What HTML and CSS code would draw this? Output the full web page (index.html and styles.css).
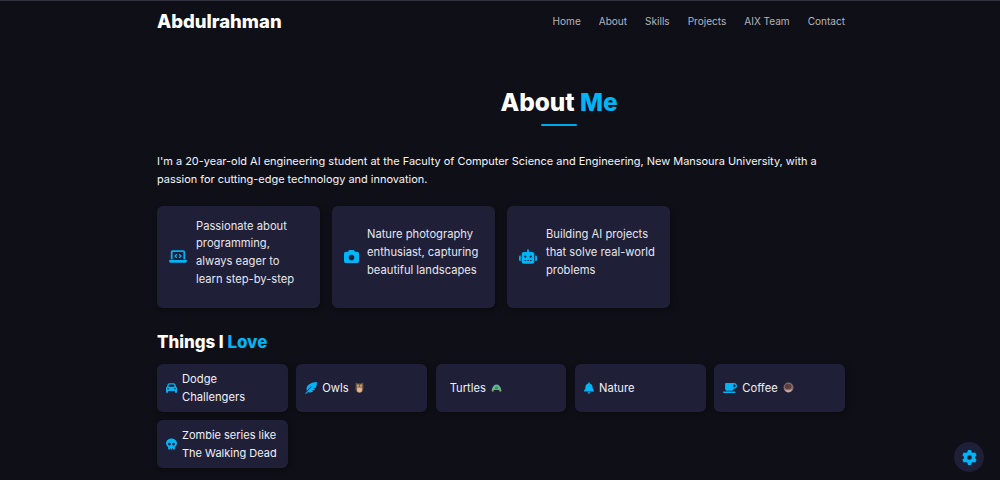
FILE: index.html
```html
<!DOCTYPE html>
<html lang="en">
<head>
<meta charset="utf-8">
<title>Abdulrahman - About</title>
<link rel="stylesheet" href="styles.css">
</head>
<body>
<header class="header">
  <div class="wrap header-row">
    <a class="logo">Abdulrahman</a>
    <nav class="nav">
      <a>Home</a><a>About</a><a>Skills</a><a>Projects</a><a>AIX Team</a><a>Contact</a>
    </nav>
  </div>
</header>
<main class="wrap">
  <h1 class="title">About <span class="accent">Me</span></h1>
  <div class="rule-row"><span class="rule"></span></div>
  <p class="intro">I'm a 20-year-old AI engineering student at the Faculty of Computer Science and Engineering, New Mansoura University, with a<br>passion for cutting-edge technology and innovation.</p>
  <section class="features">
    <article class="feature">
      <svg class="ficon laptop" viewBox="0 0 640 512"><path d="M64 96c0-35.3 28.7-64 64-64H512c35.3 0 64 28.7 64 64V352H512V96H128V352H64V96zM0 403.2C0 392.6 8.6 384 19.2 384H620.8c10.6 0 19.2 8.6 19.2 19.2c0 42.4-34.4 76.8-76.8 76.8H76.8C34.4 480 0 445.6 0 403.2zM281 209l-31 31 31 31c9.4 9.4 9.4 24.6 0 33.9s-24.6 9.4-33.9 0l-48-48c-9.4-9.4-9.4-24.6 0-33.9l48-48c9.4-9.4 24.6-9.4 33.9 0s9.4 24.6 0 33.9zM393 175l48 48c9.4 9.4 9.4 24.6 0 33.9l-48 48c-9.4 9.4-24.6 9.4-33.9 0s-9.4-24.6 0-33.9l31-31-31-31c-9.4-9.4-9.4-24.6 0-33.9s24.6-9.4 33.9 0z"/></svg>
      <p>Passionate about<br>programming,<br>always eager to<br>learn step-by-step</p>
    </article>
    <article class="feature">
      <svg class="ficon camera" viewBox="0 0 512 512"><path d="M149.1 64.8L138.7 96H64C28.7 96 0 124.7 0 160V416c0 35.3 28.7 64 64 64H448c35.3 0 64-28.7 64-64V160c0-35.3-28.7-64-64-64H373.3L362.9 64.8C356.4 45.2 338.1 32 317.4 32H194.6c-20.7 0-39 13.2-45.5 32.8zM256 192a96 96 0 1 1 0 192 96 96 0 1 1 0-192z"/></svg>
      <p>Nature photography<br>enthusiast, capturing<br>beautiful landscapes</p>
    </article>
    <article class="feature">
      <svg class="ficon robot" viewBox="0 0 640 512"><path d="M320 0c17.7 0 32 14.3 32 32V96H472c39.8 0 72 32.2 72 72V440c0 39.8-32.2 72-72 72H168c-39.8 0-72-32.2-72-72V168c0-39.8 32.2-72 72-72H288V32c0-17.7 14.3-32 32-32zM208 384c-8.8 0-16 7.2-16 16s7.2 16 16 16h32c8.8 0 16-7.2 16-16s-7.2-16-16-16H208zm96 0c-8.8 0-16 7.2-16 16s7.2 16 16 16h32c8.8 0 16-7.2 16-16s-7.2-16-16-16H304zm96 0c-8.8 0-16 7.2-16 16s7.2 16 16 16h32c8.8 0 16-7.2 16-16s-7.2-16-16-16H400zM264 256a40 40 0 1 0 -80 0 40 40 0 1 0 80 0zm152 40a40 40 0 1 0 0-80 40 40 0 1 0 0 80zM48 224H64V416H48c-26.5 0-48-21.5-48-48V272c0-26.5 21.5-48 48-48zm544 0c26.5 0 48 21.5 48 48v96c0 26.5-21.5 48-48 48H576V224h16z"/></svg>
      <p>Building AI projects<br>that solve real-world<br>problems</p>
    </article>
  </section>
  <h2 class="subtitle">Things I <span class="accent">Love</span></h2>
  <section class="loves">
    <div class="love">
      <svg class="licon narrow" viewBox="0 0 512 512"><path d="M135.2 117.4L109.1 192H402.9l-26.1-74.6C372.3 104.6 360.2 96 346.6 96H165.4c-13.6 0-25.7 8.6-30.2 21.4zM39.6 196.8L74.8 96.3C88.3 57.8 124.6 32 165.4 32H346.6c40.8 0 77.1 25.8 90.6 64.3l35.2 100.5c23.2 9.6 39.6 32.5 39.6 59.2V400v48c0 17.7-14.3 32-32 32H448c-17.7 0-32-14.3-32-32V400H96v48c0 17.7-14.3 32-32 32H32c-17.7 0-32-14.3-32-32V400 256c0-26.7 16.4-49.6 39.6-59.2zM128 288a32 32 0 1 0 -64 0 32 32 0 1 0 64 0zm288 32a32 32 0 1 0 0-64 32 32 0 1 0 0 64z"/></svg>
      <span class="label">Dodge<br>Challengers</span>
    </div>
    <div class="love">
      <svg class="licon" viewBox="0 0 512 512"><path d="M278.5 215.6L23 471c-9.4 9.4-9.4 24.6 0 33.9s24.6 9.4 33.9 0l74.8-74.8c7.4 4.6 15.3 8.2 23.8 10.5C200.3 452.8 270 454.5 338 409.4c12.2-8.1 5.8-25.4-8.8-25.4l-16.1 0c-5.1 0-9.2-4.1-9.2-9.2c0-4.1 2.7-7.6 6.5-8.8l97.7-29.3c3.4-1 6.4-3.1 8.4-6.1c4.4-6.4 8.6-12.9 12.6-19.6c6.2-10.3-1.5-23-13.5-23l-38.6 0c-5.1 0-9.2-4.1-9.2-9.2c0-4.1 2.7-7.6 6.5-8.8l80.9-24.3c4.6-1.4 8.4-4.8 10.2-9.3C494.5 163 507.8 86.1 511.9 36.8c.8-9.9-3-19.6-10-26.6s-16.7-10.8-26.6-10C391.5 7 228.5 40.5 137.4 131.6C57.3 211.7 56.7 302.3 71.3 356.4c2.1 7.9 12 9.6 17.8 3.8L253.6 195.8c6.2-6.2 16.4-6.2 22.6 0c5.4 5.4 6.1 13.6 2.2 19.8z"/></svg>
      <span class="label">Owls</span>
      <svg class="emoji" viewBox="0 0 12 12"><path fill="#7a5a3c" d="M2 .5l2 1.2h4L10 .5l.3 6.500c0 3-2 4.600-4.300 4.600S1.700 10 1.700 7z"/><path fill="#e0b49a" d="M3.400 6h5.200v3c0 1.500-1.200 2.500-2.600 2.500S3.400 10.500 3.400 9z"/><circle cx="4.300" cy="4" r="1.200" fill="#d9c2a8"/><circle cx="7.700" cy="4" r="1.200" fill="#d9c2a8"/><circle cx="4.300" cy="4" r=".5" fill="#2a1d14"/><circle cx="7.700" cy="4" r=".5" fill="#2a1d14"/></svg>
    </div>
    <div class="love love-plain">
      <span class="label">Turtles</span>
      <svg class="emoji" viewBox="0 0 12 12"><path fill="#5fb58e" d="M.8 8.800C1.300 5 3.600 2.800 6 2.800s4.700 2.200 5.200 6z"/><path fill="#3f8a68" d="M4.200 6l1.800-1.200L7.800 6l-.5 1.800H4.700z"/><path fill="#7fae5f" d="M.5 8.800h2.500v1.500H1zM9 8.800h2.500L11 10.300H9z"/></svg>
    </div>
    <div class="love">
      <svg class="licon bell" viewBox="0 0 448 512"><path d="M224 0c-17.7 0-32 14.3-32 32V51.200C119 66 64 130.600 64 208v18.800c0 47-17.300 92.400-48.500 127.600l-7.400 8.300c-8.400 9.400-10.400 22.900-5.300 34.400S19.400 416 32 416H416c12.600 0 24-7.400 29.200-18.900s3.100-25-5.300-34.400l-7.400-8.300C401.300 319.200 384 273.900 384 226.800V208c0-77.400-55-142-128-156.800V32c0-17.700-14.300-32-32-32zm45.300 493.300c12-12 18.700-28.300 18.700-45.300H224 160c0 17 6.700 33.300 18.700 45.300s28.300 18.700 45.300 18.700s33.300-6.700 45.300-18.700z"/></svg>
      <span class="label">Nature</span>
    </div>
    <div class="love">
      <svg class="licon mug" viewBox="0 0 640 512"><path d="M96 64c0-17.700 14.300-32 32-32H448h64c70.700 0 128 57.300 128 128s-57.300 128-128 128H480c0 53-43 96-96 96H192c-53 0-96-43-96-96V64zM480 224h32c35.300 0 64-28.700 64-64s-28.700-64-64-64H480V224zM32 416H544c17.700 0 32 14.300 32 32s-14.300 32-32 32H32c-17.700 0-32-14.300-32-32s14.300-32 32-32z"/></svg>
      <span class="label">Coffee</span>
      <svg class="emoji" viewBox="0 0 12 12"><circle cx="6" cy="6" r="5.400" fill="#8a6a6a"/><ellipse cx="5.500" cy="4.800" rx="3.600" ry="2.800" fill="#5c3f3f"/><path fill="#c9a9a9" d="M1.500 7.500c1.500 1.800 5.500 2.100 8.800.2-.8 2.300-2.800 3.500-4.300 3.500S2 10 1.500 7.500z"/></svg>
    </div>
    <div class="love">
      <svg class="licon narrow" viewBox="0 0 512 512"><path d="M416 398.900c58.500-41.100 96-104.100 96-174.900C512 100.300 397.400 0 256 0S0 100.300 0 224c0 70.700 37.500 133.800 96 174.900c0 .4 0 .7 0 1.100v64c0 26.500 21.500 48 48 48h48V464c0-8.800 7.200-16 16-16s16 7.200 16 16v48h64V464c0-8.800 7.200-16 16-16s16 7.200 16 16v48h48c26.500 0 48-21.500 48-48V400c0-.4 0-.7 0-1.100zM96 256a64 64 0 1 1 128 0A64 64 0 1 1 96 256zm256-64a64 64 0 1 1 0 128 64 64 0 1 1 0-128z"/></svg>
      <span class="label tight">Zombie series like<br>The Walking Dead</span>
    </div>
  </section>
</main>
<button class="settings" aria-label="Settings">
  <svg viewBox="0 0 512 512"><path d="M495.900 166.600c3.200 8.700 .5 18.400-6.400 24.600l-43.300 39.400c1.100 8.300 1.700 16.800 1.700 25.400s-.6 17.100-1.700 25.400l43.300 39.400c6.900 6.200 9.600 15.900 6.400 24.600c-4.400 11.900-9.700 23.300-15.800 34.300l-4.700 8.100c-6.600 11-14 21.400-22.100 31.200c-5.900 7.200-15.700 9.600-24.500 6.800l-55.700-17.700c-13.400 10.300-28.200 18.900-44 25.400l-12.500 57.100c-2 9.100-9 16.300-18.200 17.800c-13.800 2.300-28 3.500-42.500 3.500s-28.700-1.200-42.500-3.500c-9.200-1.500-16.200-8.700-18.200-17.800l-12.500-57.100c-15.800-6.500-30.600-15.100-44-25.400L83.100 425.900c-8.800 2.800-18.600 .3-24.500-6.800c-8.100-9.800-15.500-20.200-22.100-31.200l-4.700-8.100c-6.100-11-11.400-22.400-15.800-34.300c-3.200-8.700-.5-18.400 6.400-24.600l43.300-39.400C64.600 273.100 64 264.600 64 256s.6-17.100 1.700-25.400L22.400 191.200c-6.900-6.200-9.600-15.900-6.400-24.600c4.400-11.900 9.700-23.300 15.800-34.300l4.700-8.100c6.600-11 14-21.400 22.100-31.200c5.900-7.200 15.700-9.600 24.500-6.800l55.700 17.700c13.400-10.300 28.200-18.900 44-25.400l12.500-57.100c2-9.100 9-16.300 18.200-17.800C227.300 1.200 241.500 0 256 0s28.700 1.200 42.500 3.500c9.200 1.500 16.200 8.700 18.200 17.800l12.500 57.100c15.800 6.500 30.600 15.100 44 25.400l55.700-17.700c8.800-2.800 18.600-.3 24.500 6.800c8.100 9.800 15.500 20.200 22.100 31.200l4.700 8.100c6.100 11 11.400 22.400 15.800 34.300zM256 336a80 80 0 1 0 0-160 80 80 0 1 0 0 160z"/></svg>
</button>
</body>
</html>
```
FILE: styles.css
```css
* { box-sizing: border-box; }
html, body { margin: 0; height: 100%; overflow: hidden; }
body {
  background: #0f0f17;
  color: #f4f4f8;
  font-family: Inter, "Noto Sans", sans-serif;
  font-size: 10.96px;
  line-height: 17.8px;
}
.wrap { width: 688px; margin-left: 157px; }
.header { border-top: 1px solid #33333f; height: 42px; }
.header-row { display: flex; justify-content: space-between; align-items: center; height: 41px; }
.logo { font-size: 18.5px; font-weight: 800; color: #fff; }
.nav { display: flex; gap: 18px; color: #b4b4bc; font-size: 10.05px; }
.accent { color: #00b4f5; }
.title { margin: 42px 0 0; padding-left: 116px; text-align: center; font-size: 24.4px; line-height: 36px; font-weight: 800; color: #fff; }
.rule-row { display: flex; justify-content: center; padding-left: 116px; margin-top: 4px; }
.rule { width: 36px; height: 2px; border-radius: 1px; background: #00a9e6; }
.intro { margin: 27px 0 0; white-space: nowrap; }
.features { display: flex; gap: 12px; margin-top: 17px; }
.feature {
  width: 163px; height: 102px; padding: 11px 12px;
  display: flex; align-items: center; gap: 9px;
  background: #1f1f38; border-radius: 6px;
  box-shadow: 2px 2px 6px rgba(0, 0, 0, .35);
}
.feature p { margin: 0 0 7px; color: #e6e6ee; font-size: 11.2px; white-space: nowrap; }
.ficon, .licon { fill: #00b4f5; flex: none; }
.ficon { width: 18px; height: 15px; }
.ficon.camera { width: 15px; height: 15px; margin-right: -1px; }
.subtitle { margin: 21px 0 0; font-size: 16.9px; line-height: 26px; font-weight: 800; color: #fff; }
.loves { display: grid; grid-template-columns: repeat(5, 1fr); gap: 8px 8.6px; margin-top: 9px; }
.love {
  height: 48px; padding: 6px 9px;
  display: flex; align-items: center; gap: 5px;
  background: #1f1f38; border-radius: 6px;
  box-shadow: 2px 2px 6px rgba(0, 0, 0, .35);
  color: #f0f0f6; font-size: 11.2px; white-space: nowrap;
}
.label { padding-top: 2px; }
.love .tight { font-size: 11px; }
.love-plain { padding-left: 14px; }
.licon { width: 12px; height: 12px; }
.licon.narrow { width: 11px; }
.licon.bell { width: 10px; }
.licon.mug { width: 14px; }
.emoji { width: 11px; height: 11px; flex: none; }
.settings {
  position: fixed; right: 16px; bottom: 8px;
  width: 30px; height: 30px; padding: 0; border: 0; border-radius: 50%;
  background: #1f1f38; display: flex; align-items: center; justify-content: center;
}
.settings svg { width: 15px; height: 15px; fill: #00b4f5; }
```
